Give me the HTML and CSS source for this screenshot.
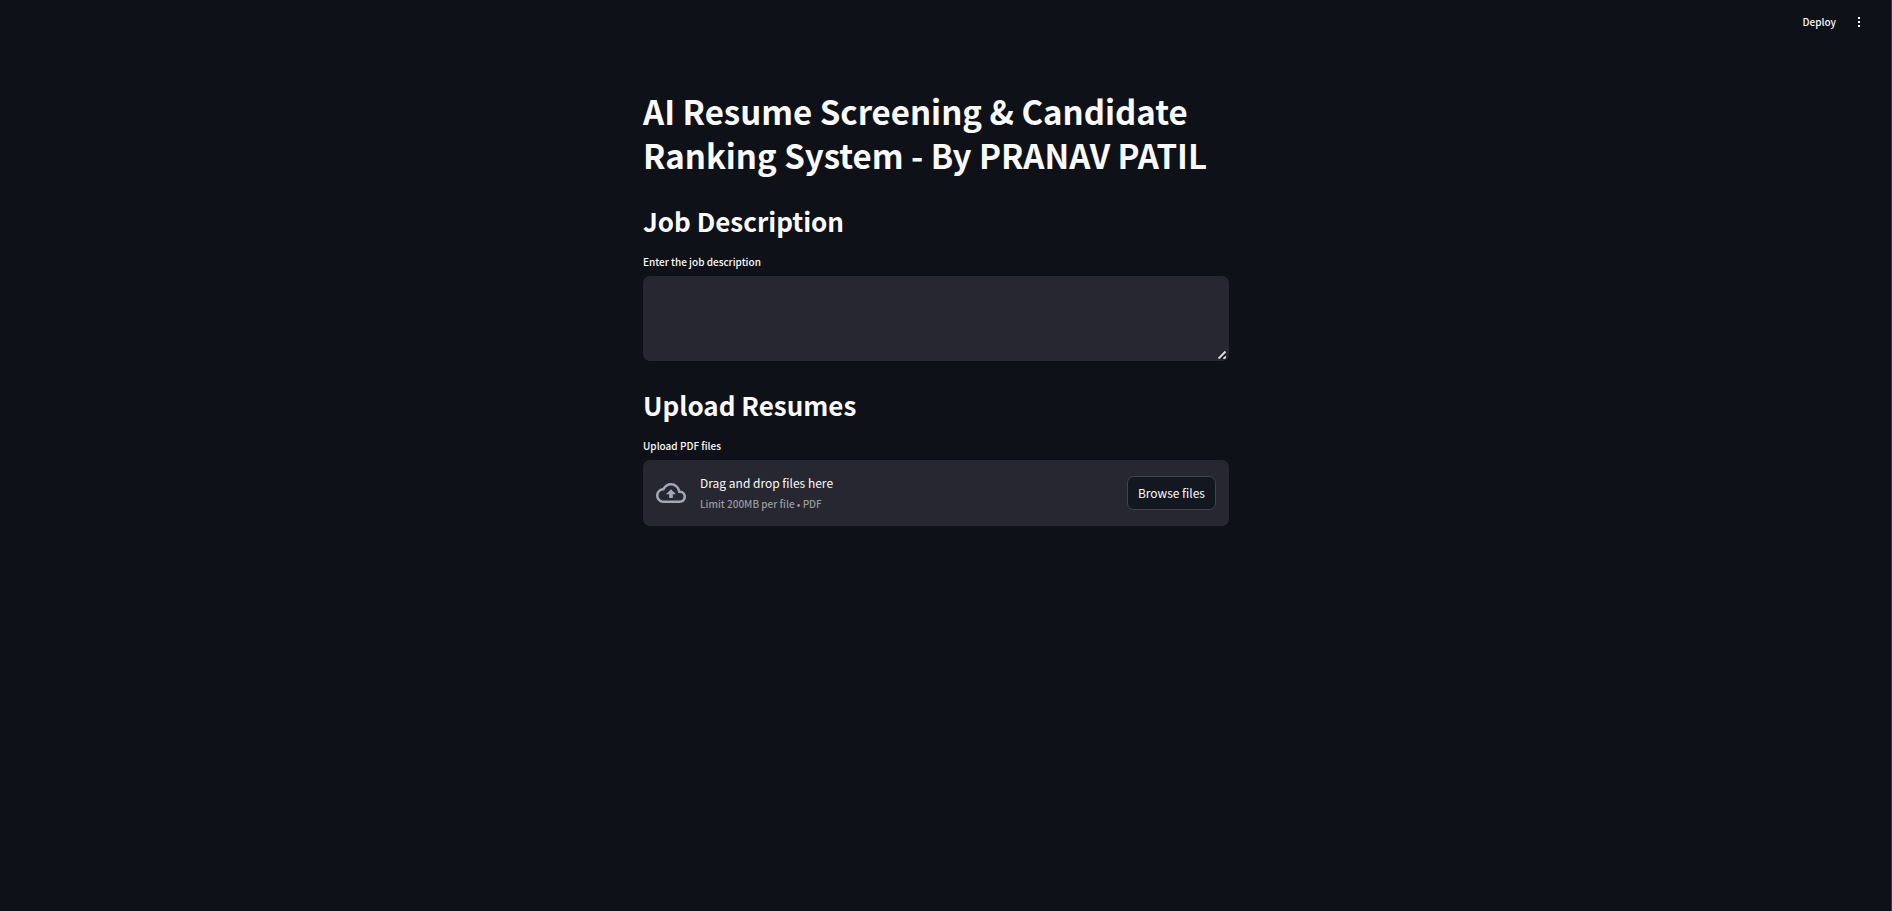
FILE: index.html
```html
<!DOCTYPE html>
<html lang="en">
<head>
<meta charset="utf-8">
<meta name="viewport" content="width=device-width, initial-scale=1">
<title>AI Resume Screening</title>
<link rel="stylesheet" href="styles.css">
</head>
<body>
<header class="toolbar">
  <button class="toolbar-button" type="button">Deploy</button>
  <button class="menu-button" type="button" aria-label="Main menu">
    <svg class="menu-icon" viewBox="0 0 14 14" aria-hidden="true"><path d="M6 2h2v2H6zM6 6h2v2H6zM6 10h2v2H6z"/></svg>
  </button>
</header>
<main class="main">
  <div class="content">
    <h1 class="title">AI Resume Screening &amp; Candidate Ranking System - By PRANAV PATIL</h1>
    <section class="section">
      <h2 class="heading">Job Description</h2>
      <label class="label" for="job">Enter the job description</label>
      <div class="textarea-wrap">
        <textarea class="textarea" id="job"></textarea>
        <svg class="grip" viewBox="0 0 9 9" aria-hidden="true"><path class="grip-shade" d="M0 7.500 7 .500"/><path class="grip-line" d="M1.500 8.500 8.500 1.500"/><path class="grip-shade" d="M4 9 9 4"/><path class="grip-line" d="M6.500 9 9 6.500"/></svg>
      </div>
    </section>
    <section class="section">
      <h2 class="heading">Upload Resumes</h2>
      <label class="label" for="browse">Upload PDF files</label>
      <div class="dropzone">
        <svg class="cloud" viewBox="0 0 24 24" aria-hidden="true"><path d="M19.350 10.040A7.490 7.490 0 0 0 12 4C9.110 4 6.600 5.640 5.350 8.040A5.994 5.994 0 0 0 0 14c0 3.310 2.690 6 6 6h13c2.760 0 5-2.240 5-5 0-2.640-2.050-4.780-4.650-4.960zM19 18H6c-2.210 0-4-1.790-4-4 0-2.050 1.530-3.760 3.560-3.970l1.070-.110.500-.950A5.469 5.469 0 0 1 12 6c2.620 0 4.880 1.860 5.390 4.430l.300 1.500 1.530.110A2.980 2.980 0 0 1 22 15c0 1.650-1.350 3-3 3zM8 13h2.550v3h2.900v-3H16l-4-4-4 4z"/></svg>
        <div class="dropzone-text">
          <span class="dropzone-title">Drag and drop files here</span>
          <span class="dropzone-limit">Limit 200MB per file • PDF</span>
        </div>
        <button class="browse" id="browse" type="button">Browse files</button>
      </div>
    </section>
  </div>
</main>
</body>
</html>
```
FILE: styles.css
```css
* { box-sizing: border-box; }
body {
  margin: 0;
  min-height: 100vh;
  background: #0e1117;
  border-right: 1px solid #3a3b3d;
  color: #fafafa;
  font-family: "Noto Sans CJK JP", "Noto Sans", sans-serif;
  font-size: 12px;
}
button { font: inherit; color: inherit; }
.toolbar {
  display: flex;
  align-items: center;
  justify-content: flex-end;
  gap: 16px;
  height: 44px;
  padding-right: 25px;
}
.toolbar-button, .menu-button {
  padding: 0;
  border: 0;
  background: none;
  font-size: 10px;
  font-weight: 500;
  line-height: 16px;
}
.menu-button { display: flex; }
.menu-icon { width: 14px; height: 14px; fill: #fafafa; }
.main {
  display: flex;
  justify-content: center;
  padding: 45px 19px 40px 0;
}
.content { width: 100%; max-width: 586px; }
.title {
  margin: 0;
  font-size: 33px;
  font-weight: 700;
  line-height: 44px;
}
.heading {
  margin: 0;
  padding-top: 25px;
  font-size: 26px;
  font-weight: 600;
  line-height: 38px;
}
.label {
  display: block;
  margin: 12px 0 4px;
  font-size: 10px;
  font-weight: 500;
  line-height: 20px;
}
.textarea-wrap { position: relative; }
.textarea {
  display: block;
  width: 100%;
  height: 85px;
  padding: 12px;
  border: 0;
  border-radius: 7px;
  background: #262730;
  color: inherit;
  font: inherit;
  resize: none;
}
.grip { position: absolute; right: 3px; bottom: 2px; width: 9px; height: 9px; fill: none; }
.grip-shade { stroke: #0e1117; stroke-width: 1; }
.grip-line { stroke: #d8d8d8; stroke-width: 2; }
.dropzone {
  display: flex;
  align-items: center;
  padding: 12px 13px;
  border-radius: 7px;
  background: #262730;
}
.cloud { width: 30px; height: 30px; margin-right: 14px; fill: #a3a8b8; }
.dropzone-text { display: flex; flex-direction: column; flex: 1; }
.dropzone-title { line-height: 22px; }
.dropzone-limit { color: #9a9b9f; font-size: 10px; font-weight: 500; line-height: 20px; }
.browse {
  height: 34px;
  padding: 0 10px 2px;
  border: 1px solid #41444c;
  border-radius: 7px;
  background: #131720;
}
```
